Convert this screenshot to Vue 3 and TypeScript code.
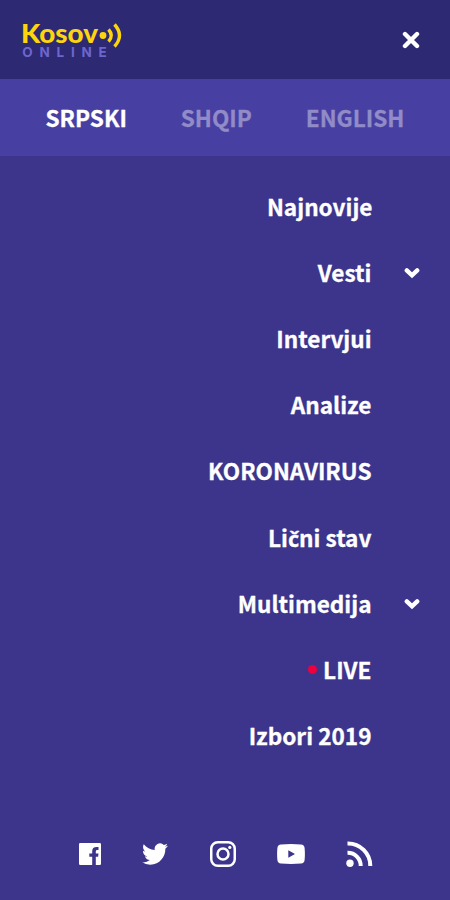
<script setup lang="ts">
interface Entry {
  label: string
  expandable?: boolean
  live?: boolean
}

const languages = ['SRPSKI', 'SHQIP', 'ENGLISH']

const entries: Entry[] = [
  { label: 'Najnovije' },
  { label: 'Vesti', expandable: true },
  { label: 'Intervjui' },
  { label: 'Analize' },
  { label: 'KORONAVIRUS' },
  { label: 'Lični stav' },
  { label: 'Multimedija', expandable: true },
  { label: 'LIVE', live: true },
  { label: 'Izbori 2019' },
]

const parts = (label: string): string[] => label.split(/([čšž])/).filter(Boolean)
const isAccented = (part: string): boolean => /^[čšž]$/.test(part)
</script>

<template>
  <div class="screen">
    <header class="header">
      <svg class="logo" width="104" height="40" viewBox="0 0 104 40" aria-label="Kosovo Online">
        <text class="logo-name" x="-1" y="22.800" textLength="77" lengthAdjust="spacingAndGlyphs">Kosov</text>
        <circle cx="81" cy="15.500" r="3.400" fill="#fdd50b" />
        <path d="M86.500 9.500q5.500 6 0 12M92.500 4.500q10 11 0 22" fill="none" stroke="#fdd50b" stroke-width="3.400" />
        <text class="logo-sub" x=".3" y="36.700" textLength="84.500">ONLINE</text>
      </svg>
      <button class="close" aria-label="Zatvori">
        <svg width="18" height="18" viewBox="0 0 18 18"><path d="M3 3l12 12M15 3L3 15" fill="none" stroke="#fff" stroke-width="4.400" stroke-linecap="round" /></svg>
      </button>
    </header>

    <nav class="languages">
      <a v-for="(lang, i) in languages" :key="lang" :class="{ active: i === 0 }">{{ lang }}</a>
    </nav>

    <nav class="menu">
      <a v-for="entry in entries" :key="entry.label" class="entry">
        <i v-if="entry.live" class="dot"></i>
        <span class="label"><span v-for="(part, i) in parts(entry.label)" :key="i" :class="{ accented: isAccented(part) }">{{ part }}</span></span>
        <svg v-if="entry.expandable" class="chevron" width="16" height="12" viewBox="0 0 16 12">
          <path d="M2.800 3.400L8 8.300l5.200-4.900" fill="none" stroke="#fff" stroke-width="4.400" stroke-linecap="round" />
        </svg>
        <b v-else class="chevron"></b>
      </a>
    </nav>

    <footer class="social">
      <svg width="22" height="22" viewBox="0 0 22 22">
        <path fill="#fff" d="M1.300 0h19.400Q22 0 22 1.300v19.400q0 1.300-1.300 1.300H16.800v-8.300h2.300l.4-3.300h-2.700V8.600c0-1.200.4-1.700 1.500-1.700h1.200V4.100c-4.300-.6-6.300.8-6.300 4.200v2.100H10.300v3.300h2.900V22H1.300Q0 22 0 20.700V1.300Q0 0 1.300 0z" />
      </svg>
      <svg width="26" height="22" viewBox="0 0 24 20" preserveAspectRatio="none">
        <path fill="#fff" d="M23.950 2.570a10 10 0 01-2.820.78 4.960 4.960 0 002.160-2.730c-.95.560-2 .960-3.120 1.190a4.920 4.920 0 00-8.390 4.480C7.690 6.100 4.070 4.130 1.640 1.160a4.820 4.820 0 00-.67 2.480c0 1.710.87 3.210 2.190 4.100a4.900 4.900 0 01-2.230-.62v.06a4.920 4.920 0 003.950 4.830 5 5 0 01-2.210.08 4.940 4.940 0 004.600 3.420A9.870 9.870 0 010 17.540a13.990 13.990 0 007.560 2.210c9.050 0 14-7.500 14-13.980 0-.21 0-.42-.02-.63a9.940 9.940 0 002.460-2.550z" />
      </svg>
      <svg width="26" height="26" viewBox="0 0 26 26" fill="none" stroke="#fff" stroke-width="2.500">
        <rect x="1.250" y="1.250" width="23.500" height="23.500" rx="6.500" />
        <circle cx="13" cy="13" r="5.500" />
        <circle cx="19.800" cy="6.400" r="1.600" fill="#fff" stroke="none" />
      </svg>
      <svg width="28" height="20" viewBox="0 0 28 20">
        <path fill="#fff" fill-rule="evenodd" d="M4 .4Q14-.4 24 .4q3.300.2 3.600 3.500.6 6.100 0 12.200-.3 3.300-3.600 3.500-10 .8-20 0-3.300-.2-3.600-3.500-.6-6.100 0-12.200Q.7.600 4 .4zM11.300 6.300v7.400l6.700-3.700z" />
      </svg>
      <svg width="27" height="26" viewBox="0 0 27 26">
        <circle cx="4" cy="22.200" r="3.700" fill="#fff" />
        <path d="M1.500 11.700A13 13 0 0 1 14.700 25M1.500 2.500A22.300 22.300 0 0 1 24.300 25" fill="none" stroke="#fff" stroke-width="4" />
      </svg>
    </footer>
  </div>
</template>

<style>
body {
  margin: 0;
}
</style>

<style scoped>
.screen {
  display: flex;
  flex-direction: column;
  box-sizing: border-box;
  width: 450px;
  height: 900px;
  overflow: hidden;
  background: #3c358b;
  color: #fff;
  font-family: "Noto Sans CJK SC", "Noto Sans", sans-serif;
  font-size: 22.6px;
  font-weight: 700;
  -webkit-text-stroke: 0.3px;
}

.header {
  display: flex;
  justify-content: space-between;
  align-items: flex-start;
  box-sizing: border-box;
  height: 79px;
  padding: 20px 30px 0 22px;
  background: #2d2973;
}

.logo {
  overflow: visible;
  -webkit-text-stroke: 0;
}

.logo-name {
  fill: #fdd50b;
  font: 900 27px Lato, sans-serif;
}

.logo-sub {
  fill: #6e66cd;
  font: 700 13.5px Inter, sans-serif;
}

.close {
  display: flex;
  margin-top: 11px;
  padding: 0;
  border: 0;
  background: none;
}

.languages {
  display: flex;
  justify-content: space-between;
  align-items: center;
  box-sizing: border-box;
  height: 77px;
  padding: 0 45.5px;
  background: #483fa2;
}

.languages a {
  color: #918bc8;
}

.languages .active {
  color: #fff;
}

.menu {
  display: flex;
  flex-direction: column;
  padding: 18px 30.5px 0 0;
}

.entry {
  display: flex;
  justify-content: flex-end;
  align-items: center;
  height: 66.1px;
}

.entry:first-child .label {
  margin-right: -1px;
}

.label {
  line-height: 34px;
  white-space: pre;
}

.accented {
  font-family: "Noto Sans", sans-serif;
  font-size: 21.5px;
  line-height: 1;
}

.chevron {
  width: 16px;
  margin-left: 32px;
}

.dot {
  width: 9px;
  height: 9px;
  margin-right: 6px;
  border-radius: 50%;
  background: #ed003f;
}

.social {
  display: flex;
  justify-content: space-between;
  align-items: center;
  height: 26px;
  margin-top: 72px;
  padding: 0 77px 0 79px;
}
</style>
